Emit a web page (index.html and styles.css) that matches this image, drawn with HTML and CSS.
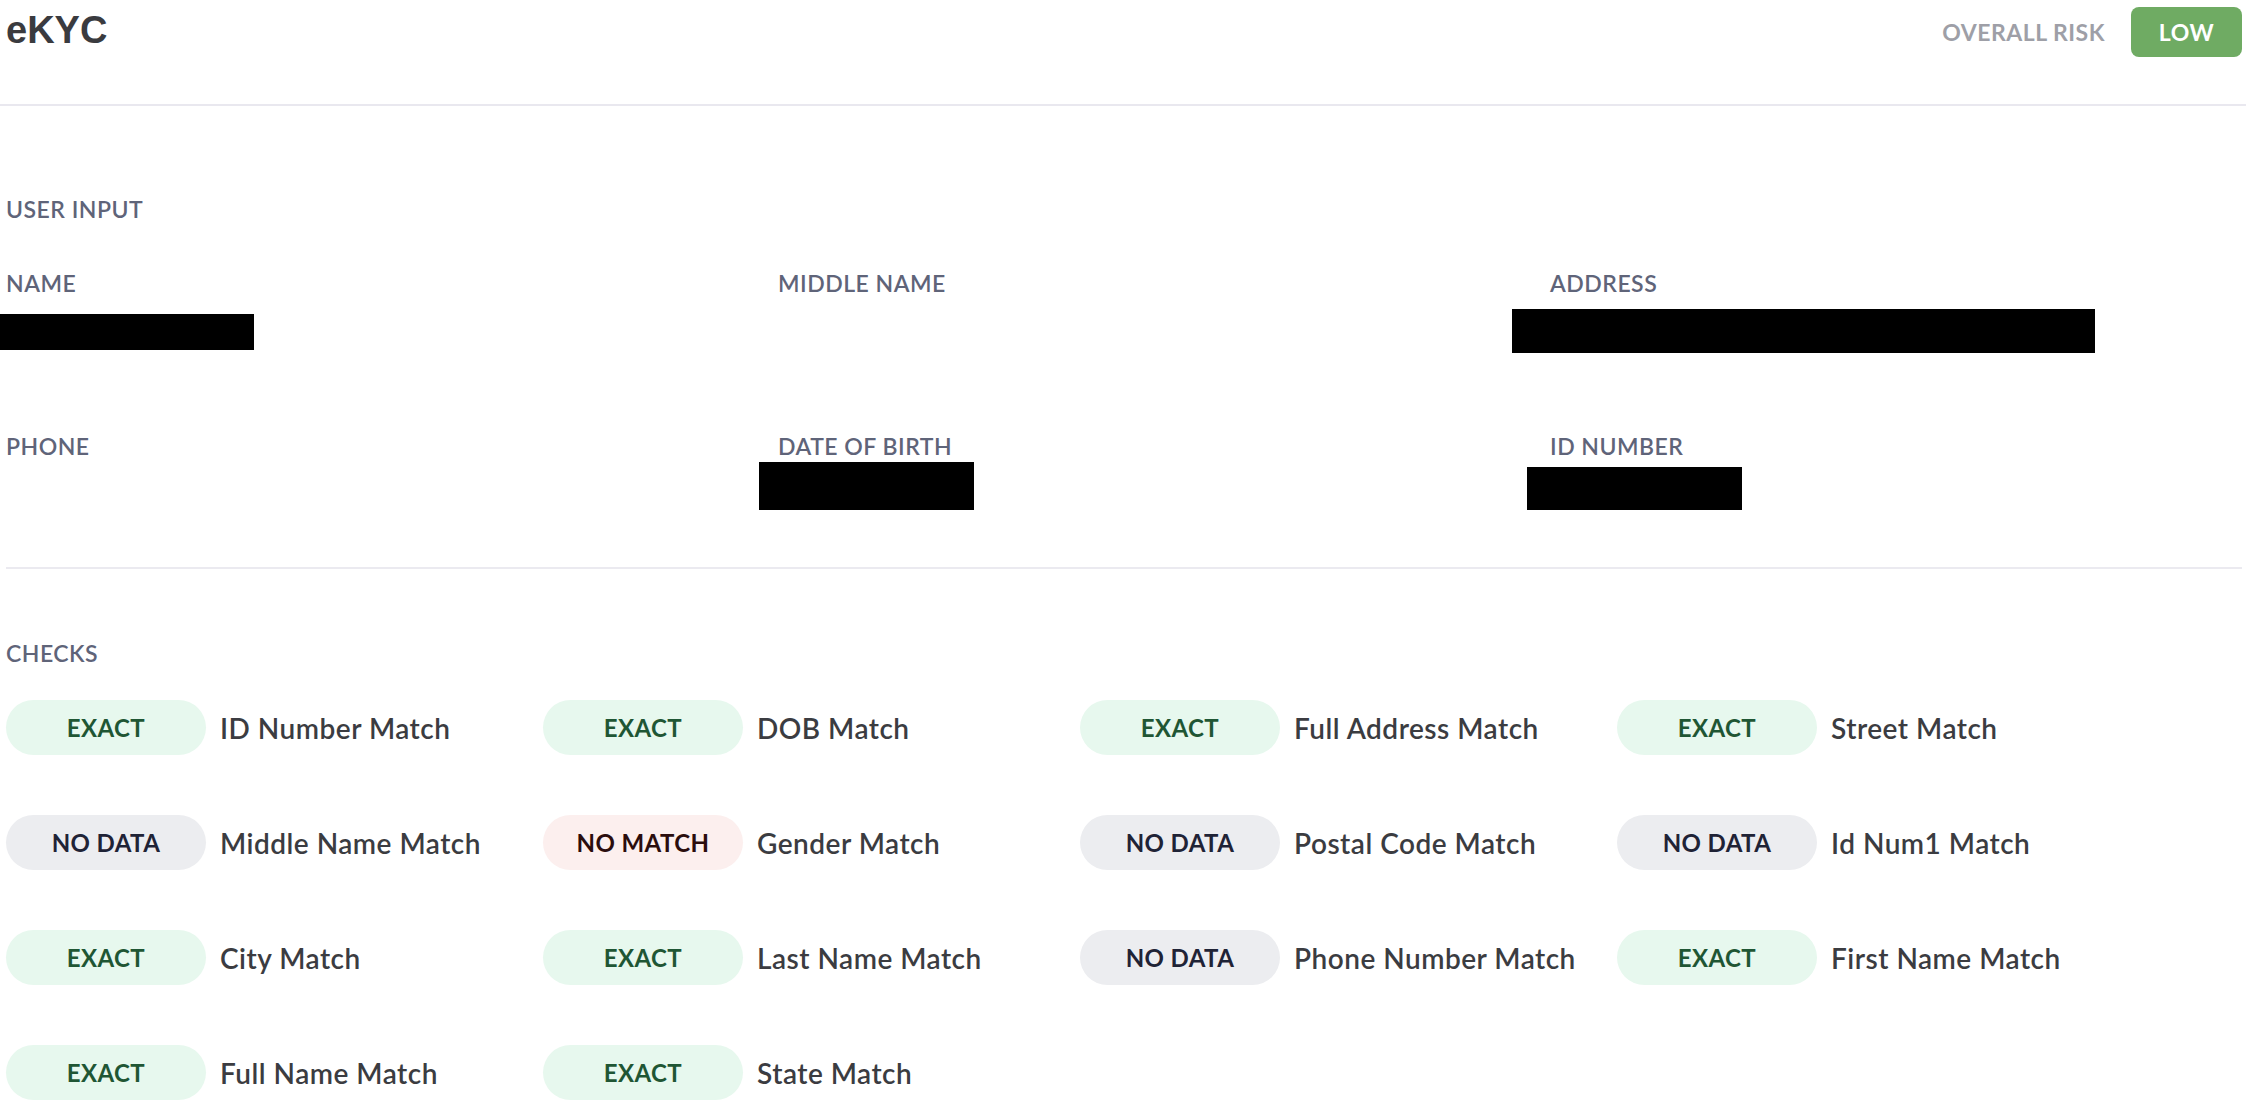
FILE: index.html
```html
<!DOCTYPE html>
<html lang="en">
<head>
    <meta charset="UTF-8">
    <meta name="viewport" content="width=device-width, initial-scale=1.0">
    <title>eKYC</title>
    <link rel="stylesheet" href="styles.css">
</head>
<body>
    <header class="topbar">
        <h1 class="title">eKYC</h1>
        <div class="risk">
            <span class="risk-label">OVERALL RISK</span>
            <span class="risk-badge">LOW</span>
        </div>
    </header>

    <section class="user-input">
        <h2 class="section-title">USER INPUT</h2>
        <div class="fields">
            <div class="field">
                <div class="field-label">NAME</div>
                <div class="field-value"><span class="redact redact-name"></span></div>
            </div>
            <div class="field">
                <div class="field-label">MIDDLE NAME</div>
                <div class="field-value"></div>
            </div>
            <div class="field">
                <div class="field-label">ADDRESS</div>
                <div class="field-value"><span class="redact redact-address"></span></div>
            </div>
            <div class="field">
                <div class="field-label">PHONE</div>
                <div class="field-value"></div>
            </div>
            <div class="field">
                <div class="field-label">DATE OF BIRTH</div>
                <div class="field-value"><span class="redact redact-dob"></span></div>
            </div>
            <div class="field">
                <div class="field-label">ID NUMBER</div>
                <div class="field-value"><span class="redact redact-id"></span></div>
            </div>
        </div>
    </section>

    <section class="checks">
        <h2 class="section-title">CHECKS</h2>
        <div class="check-grid">
            <div class="check"><span class="pill exact">EXACT</span><span class="check-name">ID Number Match</span></div>
            <div class="check"><span class="pill exact">EXACT</span><span class="check-name">DOB Match</span></div>
            <div class="check"><span class="pill exact">EXACT</span><span class="check-name">Full Address Match</span></div>
            <div class="check"><span class="pill exact">EXACT</span><span class="check-name">Street Match</span></div>

            <div class="check"><span class="pill no-data">NO DATA</span><span class="check-name">Middle Name Match</span></div>
            <div class="check"><span class="pill no-match">NO MATCH</span><span class="check-name">Gender Match</span></div>
            <div class="check"><span class="pill no-data">NO DATA</span><span class="check-name">Postal Code Match</span></div>
            <div class="check"><span class="pill no-data">NO DATA</span><span class="check-name">Id Num1 Match</span></div>

            <div class="check"><span class="pill exact">EXACT</span><span class="check-name">City Match</span></div>
            <div class="check"><span class="pill exact">EXACT</span><span class="check-name">Last Name Match</span></div>
            <div class="check"><span class="pill no-data">NO DATA</span><span class="check-name">Phone Number Match</span></div>
            <div class="check"><span class="pill exact">EXACT</span><span class="check-name">First Name Match</span></div>

            <div class="check"><span class="pill exact">EXACT</span><span class="check-name">Full Name Match</span></div>
            <div class="check"><span class="pill exact">EXACT</span><span class="check-name">State Match</span></div>
        </div>
    </section>
</body>
</html>
```

FILE: styles.css
```css
body {
    margin: 0;
    background-color: #ffffff;
    font-family: 'Lato', 'Noto Sans', sans-serif;
    color: #3b3c41;
}

/* header */

.topbar {
    display: flex;
    justify-content: space-between;
    align-items: flex-start;
    box-sizing: border-box;
    height: 106px;
    padding: 7px 4px 0 6px;
    border-bottom: 2px solid #e9e8ef;
}

.title {
    margin: 0;
    font-family: 'Liberation Sans', Arial, sans-serif;
    font-size: 38px;
    line-height: 47px;
    font-weight: 700;
    color: #3a3b3f;
}

.risk {
    display: flex;
    align-items: center;
    gap: 26px;
    height: 50px;
}

.risk-label {
    font-size: 23px;
    font-weight: 700;
    letter-spacing: 0.5px;
    color: #9e9fa7;
}

.risk-badge {
    display: flex;
    align-items: center;
    justify-content: center;
    width: 111px;
    height: 50px;
    border-radius: 8px;
    background-color: #6fab63;
    color: #ffffff;
    font-size: 23px;
    font-weight: 700;
    letter-spacing: 0.5px;
}

/* sections */

.section-title {
    margin: 0;
    font-size: 23px;
    line-height: 28px;
    font-weight: 600;
    letter-spacing: 0.5px;
    color: #5f6479;
}

.user-input {
    margin: 89px 4px 0 6px;
    padding-bottom: 35px;
    border-bottom: 2px solid #ebeaf0;
}

.fields {
    display: grid;
    grid-template-columns: 772px 772px 1fr;
    row-gap: 63px;
    margin-top: 46px;
}

.field-label {
    font-size: 23px;
    line-height: 28px;
    font-weight: 600;
    letter-spacing: 0.5px;
    color: #5f6479;
}

.field-value {
    display: flow-root;
    height: 72px;
}

/* blacked out values */
.redact {
    display: block;
    background-color: #000000;
}

.redact-name {
    width: 254px;
    height: 36px;
    margin: 17px 0 0 -6px;
}

.redact-address {
    width: 583px;
    height: 44px;
    margin: 12px 0 0 -38px;
}

.redact-dob {
    width: 215px;
    height: 48px;
    margin: 2px 0 0 -19px;
}

.redact-id {
    width: 215px;
    height: 43px;
    margin: 7px 0 0 -23px;
}

/* checks */

.checks {
    margin: 70px 4px 0 6px;
}

.check-grid {
    display: grid;
    grid-template-columns: repeat(4, 537px);
    row-gap: 60px;
    margin-top: 33px;
}

.check {
    display: flex;
    align-items: center;
    gap: 14px;
}

.pill {
    display: flex;
    align-items: center;
    justify-content: center;
    flex: none;
    width: 200px;
    height: 55px;
    border-radius: 28px;
    font-size: 24px;
    font-weight: 700;
    letter-spacing: 0.4px;
}

.pill.exact {
    background-color: #e7f8ee;
    color: #1f5634;
}

.pill.no-data {
    background-color: #ecedf0;
    color: #1f2336;
}

.pill.no-match {
    background-color: #fcefee;
    color: #2b0d0d;
}

.check-name {
    font-size: 28px;
    font-weight: 600;
    letter-spacing: 0.5px;
    color: #3b3c41;
}
```
